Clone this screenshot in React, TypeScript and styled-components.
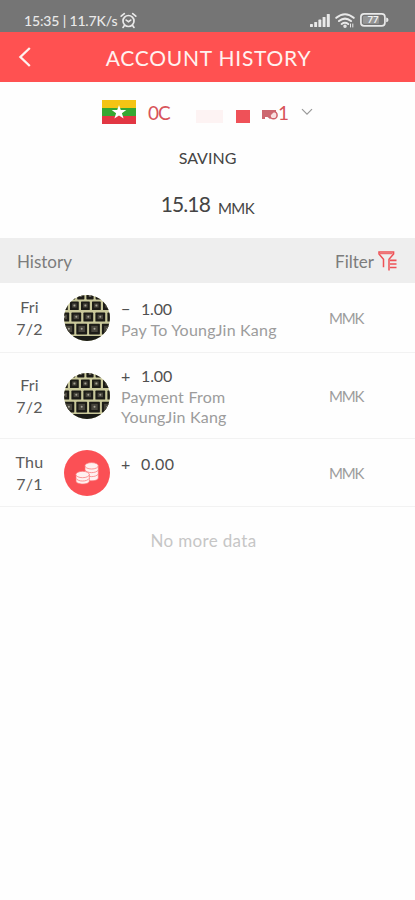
import React from "react";
import styled, { createGlobalStyle } from "styled-components";

const GlobalStyle = createGlobalStyle`
  * { box-sizing: border-box; }
  body { margin: 0; background: #fefefe; font-family: Lato, "Open Sans", sans-serif; }
`;

const Screen = styled.main`
  width: 100%;
  min-height: 900px;
  background: #fefefe;
  color: #444;
`;

const StatusBar = styled.div`
  height: 32px;
  padding: 9px 26px 0 24px;
  display: flex;
  justify-content: space-between;
  align-items: flex-start;
  background: #757575;
  color: #e9e9e9;
`;

const StatusGroup = styled.div<{ $gap: number }>`
  display: flex;
  align-items: center;
  gap: ${(p) => p.$gap}px;
  height: 22px;
`;

const Clock = styled.span`
  font-size: 14px;
  font-weight: 500;
  letter-spacing: -0.15px;
  white-space: pre;
`;

const Header = styled.header`
  height: 50px;
  display: grid;
  grid-template-columns: 50px 1fr 50px;
  align-items: center;
  background: #ff5151;
  color: #fff2ef;
`;

const BackButton = styled.button`
  display: flex;
  padding: 0 0 0 18px;
  border: 0;
  background: none;
  color: inherit;
`;

const Title = styled.h1`
  margin: 0 0 0 2px;
  text-align: center;
  font-size: 21px;
  font-weight: 400;
  letter-spacing: 0.75px;
  white-space: nowrap;
`;

const Summary = styled.section`
  height: 156px;
  display: flex;
  flex-direction: column;
  align-items: center;
`;

const AccountRow = styled.div`
  align-self: stretch;
  height: 40px;
  margin-top: 10px;
  padding-left: 102px;
  display: flex;
  align-items: center;
  color: #d8535a;
  font-size: 19px;
`;

const AccountPrefix = styled.span`
  width: 23px;
  margin-left: 12px;
  white-space: nowrap;
  letter-spacing: -1px;
`;

const Mask = styled.span<{ $w: number; $h: number; $left: number; $color: string }>`
  width: ${(p) => p.$w}px;
  height: ${(p) => p.$h}px;
  margin: 9px 0 0 ${(p) => p.$left}px;
  background: ${(p) => p.$color};
`;

const MaskedDigitCell = styled.span`
  display: flex;
  width: 16px;
  margin: 5px 0 0 12px;
`;

const AccountSuffix = styled.span`
  width: 10px;
  margin-right: 13px;
`;

const AccountType = styled.div`
  margin-top: 16px;
  height: 20px;
  line-height: 20px;
  font-size: 16px;
  color: #444;
`;

const Balance = styled.div`
  margin-top: 23px;
  display: flex;
  gap: 8px;
  align-items: flex-start;
  color: #444;
`;

const BalanceValue = styled.span`
  font-size: 21px;
  line-height: 26px;
  letter-spacing: -0.9px;
`;

const BalanceUnit = styled.span`
  font-size: 15px;
  line-height: 20px;
  margin-top: 7px;
  letter-spacing: -0.5px;
`;

const HistoryBar = styled.div`
  height: 45px;
  padding: 0 18px 0 17px;
  display: flex;
  justify-content: space-between;
  align-items: center;
  background: #eee;
  color: #7c7c7c;
  font-size: 17px;
`;

const BarLabel = styled.span`
  padding-top: 2px;
`;

const FilterButton = styled.button`
  display: flex;
  align-items: center;
  gap: 4px;
  padding: 0;
  border: 0;
  background: none;
  color: inherit;
  font: inherit;
`;

const Row = styled.article<{ $height: number }>`
  height: ${(p) => p.$height}px;
  display: grid;
  grid-template-columns: 59px 62px 192px 1fr;
  align-items: center;
  border-bottom: 1px solid #f2f2f2;
`;

const DateCell = styled.div`
  text-align: center;
  font-size: 16px;
  line-height: 22px;
  color: #5a5a5a;
  letter-spacing: 0.2px;
`;

const AvatarCell = styled.div`
  display: flex;
  padding: 1px 0 0 5px;
`;

const Details = styled.div<{ $top: number }>`
  align-self: start;
  padding-top: ${(p) => p.$top}px;
`;

const Amount = styled.div`
  display: grid;
  grid-template-columns: 20px 1fr;
  height: 22px;
  line-height: 22px;
  font-size: 16px;
  color: #505050;
`;

const AmountValue = styled.span<{ $spacing: number }>`
  letter-spacing: ${(p) => p.$spacing}px;
`;

const Description = styled.div`
  width: 168px;
  line-height: 20px;
  font-size: 16px;
  letter-spacing: 0.22px;
  color: #9c9c9c;
  white-space: pre-line;
`;

const Currency = styled.div`
  padding: 0 0 0 16px;
  font-size: 15px;
  letter-spacing: -1.2px;
  color: #9c9c9c;
`;

const EndNote = styled.p`
  margin: 22px 0 0 -8px;
  text-align: center;
  font-size: 17px;
  line-height: 24px;
  letter-spacing: 0.35px;
  color: #c6c6c6;
`;

const AlarmIcon = () => (
  <svg width="17" height="17" viewBox="0 0 17 17" fill="none" stroke="currentColor" strokeWidth="1.7" strokeLinecap="round">
    <circle cx="8.5" cy="9" r="5.5" />
    <path d="M1.2 4.2 4.3 1.6M15.8 4.2l-3.1-2.6M4.4 13.6 3 15.4M12.6 13.6l1.4 1.8M6.2 8.1l2.3 1.6 2.2-1.6" />
  </svg>
);

const SignalIcon = () => (
  <svg width="20" height="13" viewBox="0 0 20 13" fill="currentColor">
    <rect x="0" y="10" width="2.9" height="3" rx=".6" />
    <rect x="4.2" y="8" width="2.9" height="5" rx=".6" />
    <rect x="8.4" y="5.6" width="2.9" height="7.4" rx=".6" />
    <rect x="12.6" y="3" width="2.9" height="10" rx=".6" />
    <rect x="16.8" y="0" width="3" height="13" rx=".6" />
  </svg>
);

const WifiIcon = () => (
  <svg width="20" height="15" viewBox="0 0 20 15" fill="none" stroke="currentColor" strokeWidth="2.1" strokeLinecap="round">
    <path d="M1.3 4.8Q10-2.3 18.7 4.8M4 8Q10 3.3 16 8M6.7 11Q10 8.6 13.2 11" />
    <circle cx="10" cy="13.2" r=".7" fill="currentColor" />
    <path d="M15.5 11v3M17.8 11v3" strokeWidth="1" />
  </svg>
);

const BatteryIcon = () => (
  <svg width="29" height="14" viewBox="0 0 29 14">
    <rect x=".9" y=".9" width="24" height="12" rx="3.2" fill="none" stroke="currentColor" strokeWidth="1.7" />
    <rect x="3" y="3" width="16" height="7.8" rx="1" fill="#959595" />
    <text x="13" y="10.4" textAnchor="middle" fontSize="9.5" fontWeight="700" fill="#f2f2f2">77</text>
    <path d="M26.2 4.5q2.3.5 2.3 2.4t-2.3 2.4z" fill="currentColor" />
  </svg>
);

const BackIcon = () => (
  <svg width="14" height="22" viewBox="0 0 14 22" fill="none" stroke="currentColor" strokeWidth="2.3">
    <path d="M11.8 2 2.4 11l9.4 9" />
  </svg>
);

const FlagIcon = () => (
  <svg width="34" height="24" viewBox="0 0 34 24">
    <path fill="#f4c414" d="M0 0h34v8H0z" />
    <path fill="#36a832" d="M0 8h34v8H0z" />
    <path fill="#e23643" d="M0 16h34v8H0z" />
    <path fill="#fff" d="m17 5 1.8 5h5.5l-4.4 3.3 1.7 5.3L17 15.4l-4.6 3.2 1.7-5.3L9.7 10h5.5z" />
  </svg>
);

const MaskedDigit = () => (
  <svg width="16" height="12" viewBox="0 0 16 12">
    <path fill="#cd6870" d="M0 1h14v4L8 10 5.5 8H3v2H0z" />
    <circle cx="11.5" cy="6.2" r="3.6" fill="#f8dfe0" stroke="#cf6169" strokeWidth="1.5" />
    <path fill="#cd6870" d="M6 1h8L7 8z" />
  </svg>
);

const ChevronIcon = () => (
  <svg width="12" height="8" viewBox="0 0 12 8" fill="none" stroke="#999" strokeWidth="1.2">
    <path d="m1 1.2 5 5 5-5" />
  </svg>
);

const FilterIcon = () => (
  <svg width="19" height="20" viewBox="0 0 19 20" fill="none" stroke="#ee5156" strokeWidth="1.5">
    <path d="M5.5 16.3V8.2L1 3V1h14.6v2L11 8.2v11.3" />
    <path d="M2 2.7h12.6" strokeWidth="1" />
    <path d="M12 9.3h6.5M12 13h6.5M12 16.5h6.5" strokeWidth="1.7" />
  </svg>
);

const keyRows = [
  { y: -3, x: 4, w: 7.2, h: 7.4, pitch: 9.2 },
  { y: 6.4, x: -5, w: 8.8, h: 8.6, pitch: 11 },
  { y: 17.6, x: -4.6, w: 9.8, h: 9, pitch: 12 },
  { y: 28.8, x: -0.5, w: 10.8, h: 10.6, pitch: 12.8 },
];

const KeyboardAvatar = ({ id }: { id: string }) => (
  <svg width="46" height="46" viewBox="0 0 46 46">
    <defs>
      <clipPath id={id}>
        <circle cx="23" cy="23" r="23" />
      </clipPath>
    </defs>
    <g clipPath={`url(#${id})`}>
      <rect width="46" height="46" fill="#c9c89a" />
      {keyRows.map((r) =>
        [0, 1, 2, 3, 4].map((i) => (
          <g key={`${r.y}-${i}`}>
            <rect x={r.x + i * r.pitch} y={r.y} width={r.w} height={r.h} rx=".6" fill="#1c1b17" />
            <rect x={r.x + i * r.pitch + 2.2} y={r.y + 2} width={r.w - 4.4} height={r.h - 4.4} fill="#49463d" />
            <circle cx={r.x + i * r.pitch + r.w / 2} cy={r.y + r.h / 2 - 0.3} r="1" fill="#a8a598" />
          </g>
        ))
      )}
      <rect y="41" width="46" height="5" fill="#1b1c17" />
    </g>
  </svg>
);

const CoinsAvatar = () => (
  <svg width="46" height="46" viewBox="0 0 46 46">
    <circle cx="23" cy="23" r="23" fill="#fb5055" />
    <g fill="#fff1f0" stroke="#fb6e70" strokeWidth=".7">
      <path d="M21 15.8v12c0 1.8 3 3 6.7 3s6.6-1.2 6.6-3v-12z" />
      <path d="M21 20c2 3.5 11 3.5 13.3 0M21 24c2 3.5 11 3.5 13.3 0" fill="none" />
      <ellipse cx="27.6" cy="15.8" rx="6.7" ry="3.2" />
      <path d="M12 24.5V31c0 1.8 3 3 6.7 3s6.6-1.2 6.6-3v-6.5z" />
      <path d="M12 28.4c2 3.5 11 3.5 13.3 0" fill="none" />
      <ellipse cx="18.6" cy="24.5" rx="6.7" ry="3.2" />
    </g>
  </svg>
);

interface Entry {
  id: string;
  day: string;
  date: string;
  sign: string;
  amount: string;
  description?: string;
  height: number;
  top: number;
  spacing: number;
}

const entries: Entry[] = [
  { id: "pay", day: "Fri", date: "7/2", sign: "−", amount: "1.00", description: "Pay To YoungJin Kang", height: 70, top: 15, spacing: -0.2 },
  { id: "receive", day: "Fri", date: "7/2", sign: "+", amount: "1.00", description: "Payment From\nYoungJin Kang", height: 86, top: 12, spacing: -0.1 },
  { id: "opening", day: "Thu", date: "7/1", sign: "+", amount: "0.00", height: 68, top: 14, spacing: 0.5 },
];

export default function App() {
  return (
    <Screen>
      <GlobalStyle />
      <StatusBar>
        <StatusGroup $gap={3}>
          <Clock>15:35 | 11.7K/s</Clock>
          <AlarmIcon />
        </StatusGroup>
        <StatusGroup $gap={5}>
          <SignalIcon />
          <WifiIcon />
          <BatteryIcon />
        </StatusGroup>
      </StatusBar>
      <Header>
        <BackButton aria-label="Back"><BackIcon /></BackButton>
        <Title>ACCOUNT HISTORY</Title>
      </Header>
      <Summary>
        <AccountRow>
          <FlagIcon />
          <AccountPrefix>0C</AccountPrefix>
          <Mask $w={27} $h={13} $left={25} $color="#fdf3f3" />
          <Mask $w={14} $h={13} $left={13} $color="#ef5158" />
          <MaskedDigitCell><MaskedDigit /></MaskedDigitCell>
          <AccountSuffix>1</AccountSuffix>
          <ChevronIcon />
        </AccountRow>
        <AccountType>SAVING</AccountType>
        <Balance>
          <BalanceValue>15.18</BalanceValue>
          <BalanceUnit>MMK</BalanceUnit>
        </Balance>
      </Summary>
      <HistoryBar>
        <BarLabel>History</BarLabel>
        <FilterButton>
          <BarLabel>Filter</BarLabel>
          <FilterIcon />
        </FilterButton>
      </HistoryBar>
      {entries.map((e) => (
        <Row key={e.id} $height={e.height}>
          <DateCell>{e.day}<br />{e.date}</DateCell>
          <AvatarCell>{e.description ? <KeyboardAvatar id={e.id} /> : <CoinsAvatar />}</AvatarCell>
          <Details $top={e.top}>
            <Amount>
              <span>{e.sign}</span>
              <AmountValue $spacing={e.spacing}>{e.amount}</AmountValue>
            </Amount>
            {e.description && <Description>{e.description}</Description>}
          </Details>
          <Currency>MMK</Currency>
        </Row>
      ))}
      <EndNote>No more data</EndNote>
    </Screen>
  );
}
